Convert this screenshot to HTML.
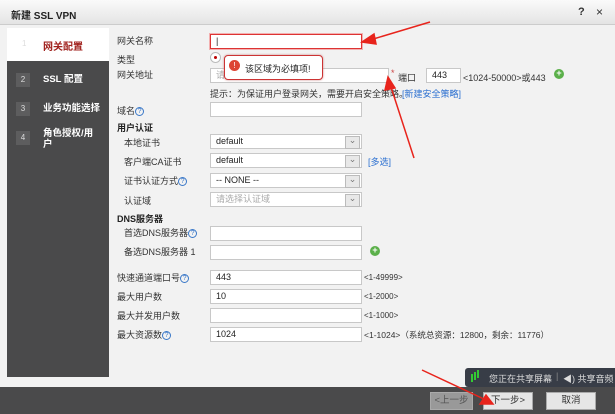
<!DOCTYPE html>
<html><head><meta charset="utf-8"><style>
*{margin:0;padding:0;box-sizing:border-box}
body{width:615px;height:414px;overflow:hidden;background:#f2f2f2;font-family:"Liberation Sans","Noto Sans CJK SC",sans-serif;font-size:9px;color:#333;position:relative}
.a{position:absolute;white-space:nowrap}
.title{left:0;top:0;width:615px;height:25px;background:linear-gradient(#fafafa,#e4e4e4);border-bottom:1px solid #ccc}
.inp{position:absolute;height:15px;background:#fff;border:1px solid #c8c8c8;font-size:9px;line-height:13px;padding-left:5px;color:#222}
.sel::after{content:"⌄";position:absolute;right:1px;top:1px;width:13px;height:11px;background:#e8e8e8;border:1px solid #bbb;font-size:9px;line-height:6px;text-align:center;color:#777}
.q{display:inline-block;width:9px;height:9px;border-radius:50%;border:1px solid #3a78c8;color:#3a78c8;font-size:7px;line-height:7px;text-align:center;vertical-align:middle}
.side{left:7px;top:61px;width:102px;height:316px;background:#4a4a4b}
.num{position:absolute;left:9px;width:14px;height:14px;background:#5d5d5e;color:#ddd;font-size:8px;text-align:center;line-height:14px}
.st{position:absolute;left:36px;color:#fff;font-weight:bold;font-size:9.5px;line-height:11px}
.btn{position:absolute;top:392px;height:18px;background:#e6e6e6;border:1px solid #aaa;text-align:center;line-height:16px;font-size:9.5px;color:#333}
</style></head><body>
<div class="a title"></div>
<div class="a" style="left:11px;top:7px;font-size:10px;color:#222;font-weight:bold">新建 SSL VPN</div>
<div class="a" style="left:578px;top:6px;font-size:11px;font-weight:bold">?</div>
<div class="a" style="left:596px;top:5px;font-size:12px">×</div>
<div class="a" style="left:7px;top:28px;width:102px;height:33px;background:#fff"></div>
<div class="a" style="left:22px;top:39px;color:#ddd;font-size:8px">1</div>
<div class="a" style="left:43px;top:38px;color:#a0201c;font-weight:bold;font-size:10px">网关配置</div>
<div class="a side">
<div class="num" style="top:12px">2</div><div class="st" style="top:13px">SSL 配置</div>
<div class="num" style="top:41px">3</div><div class="st" style="top:42px">业务功能选择</div>
<div class="num" style="top:70px">4</div><div class="st" style="top:67px">角色授权/用<br>户</div>
</div>
<div class="a" style="left:117px;top:34px">网关名称</div>
<div class="inp" style="left:210px;top:34px;width:152px;border-color:#d33;box-shadow:0 0 0 1px #f3b0b0">|</div>
<div class="a" style="left:117px;top:53px">类型</div>
<div class="a" style="left:210px;top:52px;width:11px;height:11px;border-radius:50%;border:1px solid #bbb;background:#fff"><div style="margin:3px;width:3px;height:3px;border-radius:50%;background:#b00"></div></div>
<div class="a" style="left:117px;top:68px">网关地址</div>
<div class="inp" style="left:210px;top:68px;width:179px;color:#aaa">请</div>
<div class="a" style="left:224px;top:55px;width:99px;height:25px;background:#fff;border:1px solid #c33;border-radius:4px;box-shadow:0 0 2px #c88"></div>
<div class="a" style="left:229px;top:60px;width:11px;height:11px;border-radius:50%;background:#d43;color:#fff;font-size:8px;text-align:center;line-height:11px">!</div>
<div class="a" style="left:245px;top:62px;font-size:9px;color:#222">该区域为必填项!</div>
<div class="a" style="left:391px;top:68px;color:#c44">*</div>
<div class="a" style="left:398px;top:71px">端口</div>
<div class="inp" style="left:426px;top:68px;width:35px">443</div>
<div class="a" style="left:463px;top:71px">&lt;1024-50000&gt;或443</div>
<div class="a" style="left:554px;top:69px;width:10px;height:10px;border-radius:50%;background:#5bb04a;color:#fff;font-size:9px;line-height:9px;text-align:center;font-weight:bold">+</div>
<div class="a" style="left:210px;top:87px">提示：为保证用户登录网关，需要开启安全策略。</div>
<div class="a" style="left:402px;top:87px;color:#2a6fd0">[新建安全策略]</div>
<div class="a" style="left:117px;top:104px">域名<span class="q">?</span></div>
<div class="inp" style="left:210px;top:102px;width:152px"></div>
<div class="a" style="left:117px;top:121px;font-weight:bold;color:#222">用户认证</div>
<div class="a" style="left:124px;top:136px">本地证书</div>
<div class="inp sel" style="left:210px;top:134px;width:152px">default</div>
<div class="a" style="left:124px;top:155px">客户端CA证书</div>
<div class="inp sel" style="left:210px;top:153px;width:152px">default</div>
<div class="a" style="left:368px;top:155px;color:#2a6fd0">[多选]</div>
<div class="a" style="left:124px;top:174px">证书认证方式<span class="q">?</span></div>
<div class="inp sel" style="left:210px;top:173px;width:152px">-- NONE --</div>
<div class="a" style="left:124px;top:194px">认证域</div>
<div class="inp sel" style="left:210px;top:192px;width:152px;color:#aaa">请选择认证域</div>
<div class="a" style="left:117px;top:212px;font-weight:bold;color:#222">DNS服务器</div>
<div class="a" style="left:124px;top:226px">首选DNS服务器<span class="q">?</span></div>
<div class="inp" style="left:210px;top:226px;width:152px"></div>
<div class="a" style="left:124px;top:245px">备选DNS服务器 1</div>
<div class="inp" style="left:210px;top:245px;width:152px"></div>
<div class="a" style="left:370px;top:246px;width:10px;height:10px;border-radius:50%;background:#5bb04a;color:#fff;font-size:9px;line-height:9px;text-align:center;font-weight:bold">+</div>
<div class="a" style="left:117px;top:271px">快速通道端口号<span class="q">?</span></div>
<div class="inp" style="left:210px;top:270px;width:152px">443</div>
<div class="a" style="left:364px;top:273px;font-size:8px">&lt;1-49999&gt;</div>
<div class="a" style="left:117px;top:290px">最大用户数</div>
<div class="inp" style="left:210px;top:289px;width:152px">10</div>
<div class="a" style="left:364px;top:292px;font-size:8px">&lt;1-2000&gt;</div>
<div class="a" style="left:117px;top:309px">最大并发用户数</div>
<div class="inp" style="left:210px;top:308px;width:152px"></div>
<div class="a" style="left:364px;top:311px;font-size:8px">&lt;1-1000&gt;</div>
<div class="a" style="left:117px;top:328px">最大资源数<span class="q">?</span></div>
<div class="inp" style="left:210px;top:327px;width:152px">1024</div>
<div class="a" style="left:364px;top:329px;font-size:8.5px">&lt;1-1024&gt;（系统总资源：12800，剩余：11776）</div>
<div class="a" style="left:0;top:387px;width:615px;height:27px;background:#4a4a4b"></div>
<div class="a" style="left:465px;top:368px;width:150px;height:19px;background:#383d47;border-radius:3px 0 0 3px"></div>
<div class="a" style="left:471px;top:374px;width:2px;height:8px;background:#3c3;box-shadow:3px -2px 0 #3c3,6px -4px 0 #3c3"></div>
<div class="a" style="left:489px;top:372px;color:#ddd;font-size:9px">您正在共享屏幕</div>
<div class="a" style="left:556px;top:371px;color:#888">|</div>
<div class="a" style="left:563px;top:372px;color:#ddd;font-size:9px">◀) 共享音频</div>
<div class="btn" style="left:430px;width:43px;background:#999;color:#555">&lt;上一步</div>
<div class="btn" style="left:483px;width:50px">下一步&gt;</div>
<div class="btn" style="left:546px;width:50px">取消</div>
<svg class="a" style="left:0;top:0" width="615" height="414">
<g stroke="#e8241c" fill="#e8241c" stroke-width="1.5">
<line x1="430" y1="22" x2="370" y2="40"/><polygon points="362,42 374,34 376,44"/>
<line x1="414" y1="158" x2="390" y2="84"/><polygon points="388,77 385,90 395,88"/>
<line x1="422" y1="370" x2="486" y2="400"/><polygon points="493,404 480,404 486,395"/>
</g></svg>
</body></html>
